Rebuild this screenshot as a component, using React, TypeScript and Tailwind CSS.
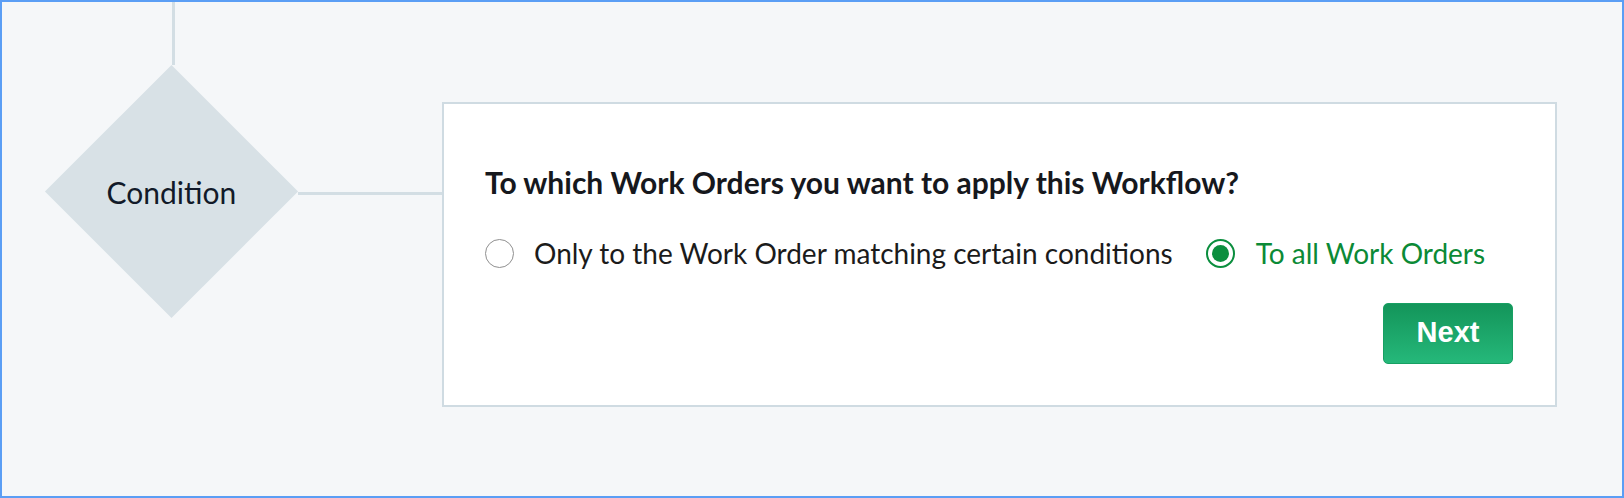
export default function App() {
  return (
    <div className="w-[1624px] h-[498px] border-2 border-[#5b9ef5] bg-[#f5f7f9] flex items-start font-['Lato',sans-serif]">
      {/* flow: line + condition diamond */}
      <div className="ml-[43px] w-[253px] flex flex-col items-center">
        <div className="ml-[4px] w-[3px] h-[63px] bg-[#d3dee4]" />
        <div className="w-[253px] h-[253px] flex items-center justify-center">
          <div className="w-[179px] h-[179px] rotate-45 bg-[#d8e1e6] flex items-center justify-center">
            <span className="-rotate-45 text-[30px] leading-none text-[#121a29]">Condition</span>
          </div>
        </div>
      </div>

      <div className="mt-[190px] w-[144px] h-[3px] bg-[#d3dee4]" />

      <div className="mt-[100px] w-[1115px] h-[305px] bg-white border-2 border-[#cfdbe2] pt-[60px] pl-[41px] pr-[42px] flex flex-col">
        <h1 className="text-[30px] font-bold text-[#16181d] leading-[1.2]">
          To which Work Orders you want to apply this Workflow?
        </h1>

        <div className="mt-[37px] flex items-center text-[28px] leading-[1.2]">
          <label className="flex items-center gap-[20px] text-[#1b1b1b]">
            <span className="w-[29px] h-[29px] rounded-full border-[1.5px] border-[#8f8f8f] bg-white" />
            Only to the Work Order matching certain conditions
          </label>
          <label className="ml-[33px] flex items-center gap-[21px] text-[#0b8a36]">
            <span className="w-[29px] h-[29px] rounded-full border-2 border-[#0b8e3e] flex items-center justify-center">
              <span className="w-[17px] h-[17px] rounded-full bg-[#0b8e3e]" />
            </span>
            To all Work Orders
          </label>
        </div>

        <div className="mt-[32px] flex justify-end">
          <button className="w-[130px] h-[61px] rounded-[5px] border border-[#17a063] bg-gradient-to-b from-[#13955a] to-[#25b87a] text-white text-[29px] font-semibold font-['Liberation_Sans',Arial,sans-serif]">
            Next
          </button>
        </div>
      </div>
    </div>
  )
}
